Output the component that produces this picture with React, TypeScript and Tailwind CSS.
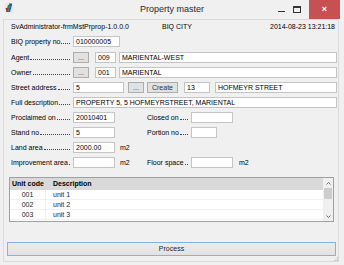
import React from "react";

const inputCls =
  "h-[11px] bg-white border border-[#c4c4c4] pl-[2px] leading-[9px] text-[7px] text-black whitespace-nowrap overflow-hidden";

function Input({ w, value = "", focus = false, grow = false }: { w?: string; value?: string; focus?: boolean; grow?: boolean }) {
  return (
    <div
      className={`${inputCls} ${grow ? "flex-1" : ""} ${focus ? "border-[#7eb4ea]" : ""}`}
      style={w ? { width: w } : undefined}
    >
      {value}
    </div>
  );
}

function Btn({ w, label }: { w: string; label: string }) {
  return (
    <div
      className="h-[11px] border border-[#adadad] bg-[#e1e1e1] flex items-center justify-center leading-[9px] text-[7px] text-[#333]"
      style={{ width: w }}
    >
      {label}
    </div>
  );
}

function Label({ text, w = "62px" }: { text: string; w?: string }) {
  return (
    <div className="flex items-end h-[11px] pr-[3px] whitespace-nowrap text-[7px] text-black" style={{ width: w }}>
      <span className="leading-[11px]">{text}</span>
      <div className="flex-1 border-b border-dotted border-[#444] mb-[3px] ml-[1px]" />
    </div>
  );
}

export default function App() {
  return (
    <div className="w-[344px] h-[265px] bg-[#f0f0f0] flex flex-col overflow-hidden font-['Liberation_Sans',Arial,sans-serif] text-black">
      {/* Title bar */}
      <div className="h-[19px] flex items-start relative shrink-0">
        <div className="ml-[5px] mt-[3px] w-[8px] h-[10px]">
          <svg width="8" height="10" viewBox="0 0 8 10">
            <rect x="0" y="0" width="8" height="10" fill="#e8e8e8" />
            <path d="M1 9 L3 2 L5 2 L3 9 Z" fill="#2e7d32" />
            <path d="M3 9 L5 2 L7 2 L5 9 Z" fill="#1565c0" />
            <path d="M0.5 5 L2.5 5 L1.5 9 Z" fill="#c62828" />
            <rect x="4" y="0.5" width="3" height="2" fill="#455a64" />
          </svg>
        </div>
        <div className="absolute left-0 right-0 top-[4px] text-center text-[9px] leading-[11px] text-[#2b2b2b]">
          Property master
        </div>
        <div className="ml-auto flex items-start h-[19px]">
          <div className="w-[16px] h-[19px] flex items-center justify-center">
            <div className="w-[7px] h-[1px] bg-[#333] mt-[3px]" />
          </div>
          <div className="w-[16px] h-[19px] flex items-center justify-center mr-[4px]">
            <div className="w-[8px] h-[7px] border border-[#333] border-t-2" />
          </div>
          <div className="w-[31px] h-[19px] bg-[#c75050] flex items-center justify-center text-white text-[9px] font-bold leading-[9px]">
            ×
          </div>
          <div className="w-[4px]" />
        </div>
      </div>

      {/* Client area */}
      <div className="ml-[3px] mr-[5px] h-[243px] border border-[#dadada] bg-[#f0f0f0] flex flex-col pl-[7px] pr-[1px] relative">
        {/* header */}
        <div className="mt-[3px] h-[8px] flex items-center text-[7px] leading-[8px] pr-[2px]">
          <div className="w-[151px]">SvAdministrator-frmMstPrprop-1.0.0.0</div>
          <div>BIQ CITY</div>
          <div className="ml-auto">2014-08-23 13:21:18</div>
        </div>

        <div className="mt-[5px] flex items-center">
          <Label text="BIQ property no" />
          <Input w="47px" value="010000005" />
        </div>

        <div className="mt-[5px] flex items-center">
          <Label text="Agent" />
          <Btn w="16px" label="..." />
          <div className="ml-[6px]"><Input w="21px" value="009" /></div>
          <div className="ml-[3px] flex-1 flex"><Input grow focus value="MARIENTAL-WEST" /></div>
        </div>

        <div className="mt-[4px] flex items-center">
          <Label text="Owner" />
          <Btn w="16px" label="..." />
          <div className="ml-[6px]"><Input w="21px" value="001" /></div>
          <div className="ml-[3px] flex-1 flex"><Input grow value="MARIENTAL" /></div>
        </div>

        <div className="mt-[4px] flex items-center">
          <Label text="Street address" />
          <Input w="51px" value="5" />
          <div className="ml-[4px]"><Btn w="16px" label="..." /></div>
          <div className="ml-[3px]"><Btn w="31px" label="Create" /></div>
          <div className="ml-[6px]"><Input w="26px" value="13" /></div>
          <div className="ml-[5px] flex-1 flex"><Input grow value="HOFMEYR STREET" /></div>
        </div>

        <div className="mt-[4px] flex items-center">
          <Label text="Full description" />
          <Input grow value="PROPERTY 5, 5 HOFMEYRSTREET, MARIENTAL" />
        </div>

        <div className="mt-[4px] flex items-center">
          <Label text="Proclaimed on" />
          <Input w="42px" value="20010401" />
          <div className="w-[32px]" />
          <Label w="44px" text="Closed on" />
          <Input w="42px" />
        </div>

        <div className="mt-[4px] flex items-center">
          <Label text="Stand no" />
          <Input w="42px" value="5" />
          <div className="w-[32px]" />
          <Label w="44px" text="Portion no" />
          <Input w="26px" />
        </div>

        <div className="mt-[4px] flex items-center">
          <Label text="Land area" />
          <Input w="42px" value="2000.00" />
          <div className="w-[32px] pl-[5px] text-[7px] leading-[11px]">m2</div>
        </div>

        <div className="mt-[4px] flex items-center">
          <Label text="Improvement area" />
          <Input w="42px" />
          <div className="w-[32px] pl-[5px] text-[7px] leading-[11px]">m2</div>
          <Label w="44px" text="Floor space" />
          <Input w="42px" />
          <div className="pl-[6px] text-[7px] leading-[11px]">m2</div>
        </div>

        {/* List */}
        <div className="mt-[9px] -ml-[2px] mr-[3px] h-[45px] border border-[#a0a0a0] bg-white flex">
          <div className="flex-1 flex flex-col">
            <div className="h-[12px] bg-[#d9d9d9] flex items-center text-[7px] font-bold leading-[12px]">
              <div className="w-[36px] pl-[2px]">Unit code</div>
              <div className="pl-[7px]">Description</div>
            </div>
            {["001", "002", "003"].map((c, i) => (
              <div key={c} className="h-[10px] flex items-center border-b border-[#f0f0f0] text-[7px] leading-[9px]">
                <div className="w-[36px] text-center text-[#222] border-r border-[#f0f0f0] h-full leading-[9px]">{c}</div>
                <div className="pl-[7px] text-[#1a2350]">unit {i + 1}</div>
              </div>
            ))}
          </div>
          <div className="w-[10px] bg-[#f0f0f0] flex flex-col items-center">
            <div className="h-[10px] flex items-center justify-center">
              <svg width="5" height="3" viewBox="0 0 5 3"><path d="M0.5 2.5 L2.5 0.5 L4.5 2.5" stroke="#606060" fill="none" strokeWidth="0.9" /></svg>
            </div>
            <div className="w-[8px] h-[11px] bg-[#cdcdcd]" />
            <div className="flex-1" />
            <div className="h-[10px] flex items-center justify-center">
              <svg width="5" height="3" viewBox="0 0 5 3"><path d="M0.5 0.5 L2.5 2.5 L4.5 0.5" stroke="#606060" fill="none" strokeWidth="0.9" /></svg>
            </div>
          </div>
        </div>

        {/* Process */}
        <div className="mt-[20px] -ml-[4px] mr-[1px] h-[14px] border border-[#7eb4ea] bg-gradient-to-b from-[#ececec] to-[#e2e2e2] flex items-center justify-center text-[7px] text-[#222]">
          Process
        </div>

        {/* resize grip */}
        <div className="absolute right-[0px] bottom-[0px] w-[4px] h-[4px]">
          <svg width="4" height="4" viewBox="0 0 4 4">
            <rect x="3" y="0" width="1" height="1" fill="#bbb" />
            <rect x="1.5" y="1.5" width="1" height="1" fill="#bbb" />
            <rect x="3" y="1.5" width="1" height="1" fill="#bbb" />
            <rect x="0" y="3" width="1" height="1" fill="#bbb" />
            <rect x="1.5" y="3" width="1" height="1" fill="#bbb" />
            <rect x="3" y="3" width="1" height="1" fill="#bbb" />
          </svg>
        </div>
      </div>
    </div>
  );
}
